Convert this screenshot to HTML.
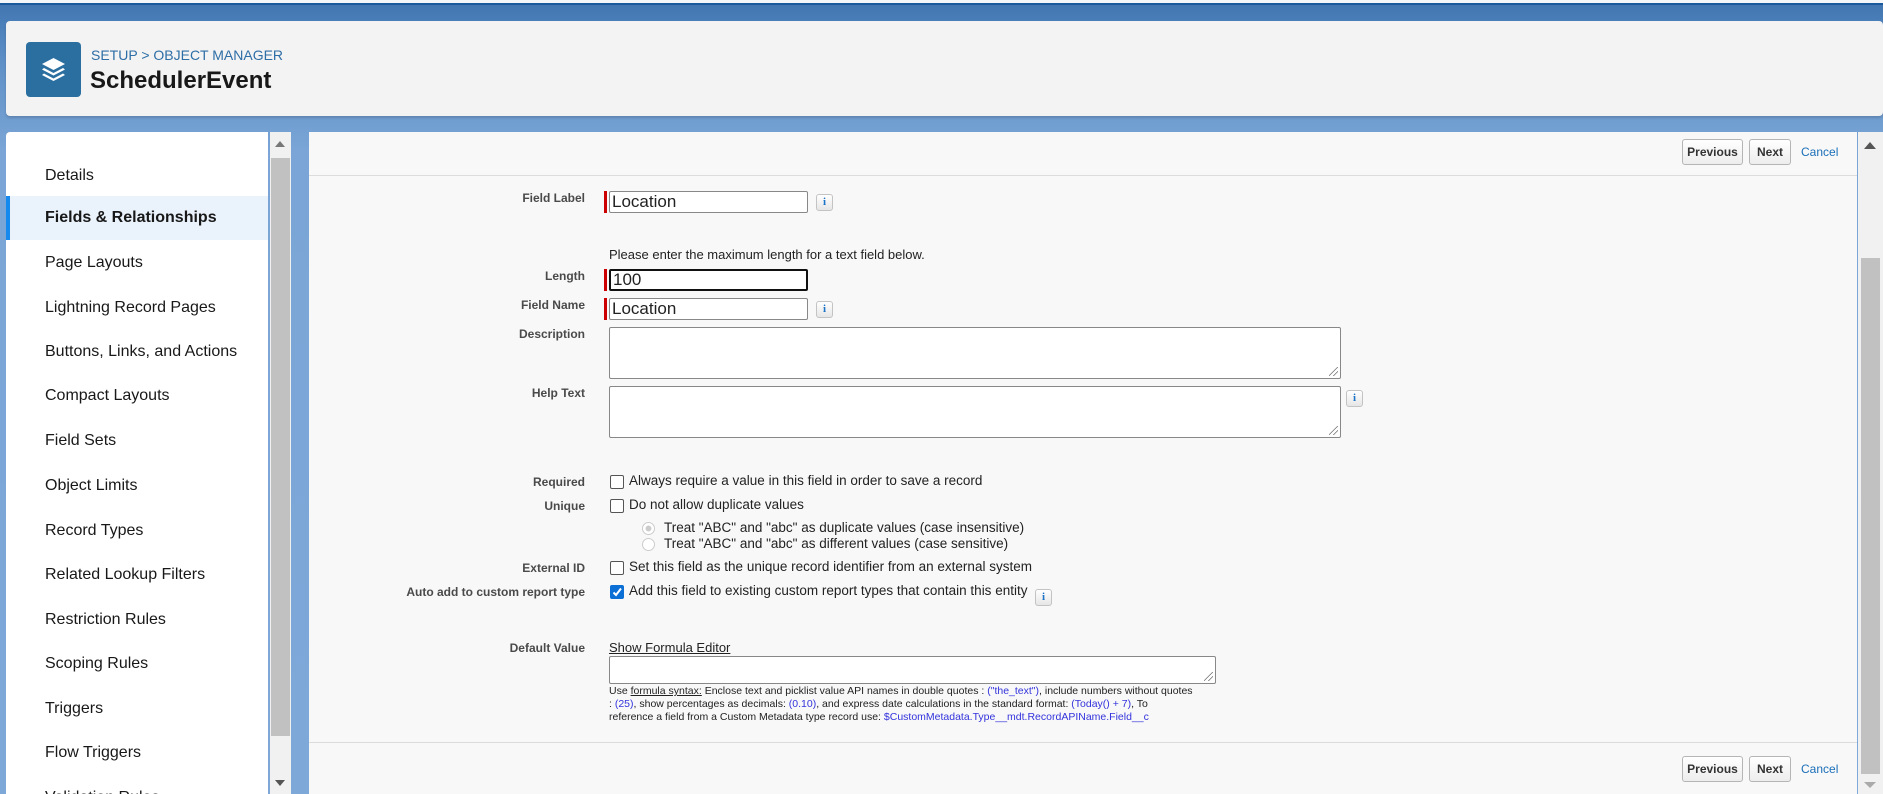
<!DOCTYPE html>
<html style="height:794px;overflow:hidden"><head><meta charset="utf-8"><style>
*{box-sizing:border-box;margin:0;padding:0}
body{width:1883px;height:794px;overflow:hidden;position:relative;font-family:"Liberation Sans",Arial,sans-serif;background:linear-gradient(#3f74b0 0,#5d8fc6 60px,#7aa5d6 150px,#7ea8d8 794px)}
.top{position:absolute;left:0;top:0;width:1883px;height:5px;background:#f4f6f9;border-bottom:2px solid #1a5a9c}
.hdr{position:absolute;left:6px;top:21px;width:1877px;height:95px;background:#f3f3f3;border-radius:4px;box-shadow:0 2px 2px rgba(0,0,0,.15)}
.ico{position:absolute;left:20px;top:21px;width:55px;height:55px;background:#2a6fa0;border-radius:4px}
.bc{position:absolute;left:85px;top:26px;font-size:14px;color:#2e6ea6}
.ttl{position:absolute;left:84px;top:46px;font-size:24px;font-weight:bold;color:#181818}
.side{position:absolute;left:6px;top:132px;width:262px;height:662px;background:#fff;border-radius:4px 0 0 0;overflow:hidden}
.side div{position:absolute;left:0;width:262px;height:44px;padding-left:39px;font-size:16px;color:#181818;line-height:44px}
.side .sel{background:#eaf2fc;font-weight:bold;border-left:4px solid #1589ee;padding-left:35px}
.sb{position:absolute;left:270px;top:132px;width:21px;height:662px;background:#f1f1f1;overflow:hidden}
.sb .th{position:absolute;left:1px;top:26px;width:19px;height:578px;background:#c1c1c1}
.main{position:absolute;left:309px;top:132px;width:1548px;height:662px;background:#f8f8f8}
.sep{position:absolute;left:0;width:1548px;height:1px;background:#dcdcdc}
.btn{position:absolute;height:26px;border:1px solid #b5b5b5;border-radius:3px;background:linear-gradient(#fff,#ededed);font-size:12px;font-weight:bold;color:#333;line-height:24px;text-align:center}
.cancel{position:absolute;font-size:12px;color:#1b6fb8}
.vsb{position:absolute;left:1858px;top:132px;width:25px;height:662px;background:#f1f1f1;overflow:hidden}
.vsb .th{position:absolute;left:3px;top:126px;width:19px;height:516px;background:#c1c1c1}
.lbl{position:absolute;right:1298px;font-size:12px;font-weight:bold;color:#4a4a4a;text-align:right;white-space:nowrap}
.inp{position:absolute;left:609px;width:199px;height:22px;background:#fff;border:1px solid #888;border-radius:2px;font-size:17px;color:#222;padding-left:2px;line-height:20px}
.req{position:absolute;left:604px;width:3px;height:22px;background:#c00}
.ta{position:absolute;left:609px;background:#fff;border:1px solid #888;border-radius:2px}
.ta:after{content:"";position:absolute;right:2px;bottom:2px;width:9px;height:9px;background:linear-gradient(135deg,transparent 45%,#777 46%,#777 52%,transparent 53%,transparent 70%,#777 71%,#777 77%,transparent 78%)}
.info{position:absolute;width:17px;height:17px;border:1px solid #c3c3c3;border-radius:3px;background:linear-gradient(#fff,#e6e6e6);color:#1a73c8;font:bold 11px "Liberation Serif",serif;text-align:center;line-height:15px}
.t{position:absolute;font-size:13.5px;color:#222;white-space:nowrap}
.cb{position:absolute;left:610px;width:14px;height:14px;border:1px solid #555;border-radius:2px;background:#fff}
.rd{position:absolute;left:642px;width:13px;height:13px;border:1px solid #ccc;border-radius:50%;background:#fff}
.help{position:absolute;left:609px;top:685px;font-size:10.5px;line-height:13px;color:#222;white-space:nowrap}
.help span{color:#3333dd}
</style></head><body>
<div class="top"></div>
<div class="hdr">
<div class="ico"><svg width="55" height="55" viewBox="0 0 55 55"><g fill="#fff"><path d="M27.5 16 L39 22 L27.5 28 L16 22Z"/><path d="M18 26 L27.5 31 L37 26 L39 27.5 L27.5 33.5 L16 27.5Z"/><path d="M18 31.5 L27.5 36.5 L37 31.5 L39 33 L27.5 39 L16 33Z"/></g></svg></div>
<div class="bc">SETUP &gt; OBJECT MANAGER</div>
<div class="ttl">SchedulerEvent</div>
</div>
<div class="side">
<div style="top:22px">Details</div>
<div class="sel" style="top:64px">Fields &amp; Relationships</div>
<div style="top:109px">Page Layouts</div>
<div style="top:154px">Lightning Record Pages</div>
<div style="top:198px">Buttons, Links, and Actions</div>
<div style="top:242px">Compact Layouts</div>
<div style="top:287px">Field Sets</div>
<div style="top:332px">Object Limits</div>
<div style="top:377px">Record Types</div>
<div style="top:421px">Related Lookup Filters</div>
<div style="top:466px">Restriction Rules</div>
<div style="top:510px">Scoping Rules</div>
<div style="top:555px">Triggers</div>
<div style="top:599px">Flow Triggers</div>
<div style="top:644px">Validation Rules</div>
</div>
<div class="sb"><div style="position:absolute;left:5px;top:9px;border:5px solid transparent;border-bottom:6px solid #777;border-top:0"></div><div class="th"></div><div style="position:absolute;left:5px;top:648px;border:5px solid transparent;border-top:6px solid #555;border-bottom:0"></div></div>
<div class="main">
<div class="sep" style="top:43px"></div>
<div class="sep" style="top:610px"></div>
</div>
<div class="btn" style="left:1682px;top:139px;width:61px">Previous</div>
<div class="btn" style="left:1749px;top:139px;width:42px">Next</div>
<div class="cancel" style="left:1801px;top:145px">Cancel</div>
<div class="btn" style="left:1682px;top:756px;width:61px">Previous</div>
<div class="btn" style="left:1749px;top:756px;width:42px">Next</div>
<div class="cancel" style="left:1801px;top:762px">Cancel</div>
<div class="vsb"><div style="position:absolute;left:6px;top:10px;border:6px solid transparent;border-bottom:7px solid #555;border-top:0"></div><div class="th"></div><div style="position:absolute;left:6px;top:650px;border:6px solid transparent;border-top:6px solid #aaa;border-bottom:0"></div></div>

<div class="lbl" style="top:191px">Field Label</div>
<div class="req" style="top:191px"></div><div class="inp" style="top:191px">Location</div>
<div class="info" style="left:816px;top:194px">i</div>
<div class="t" style="left:609px;top:247px;font-size:13px">Please enter the maximum length for a text field below.</div>
<div class="lbl" style="top:269px">Length</div>
<div class="req" style="top:269px"></div><div class="inp" style="top:269px;border:2px solid #111;line-height:18px">100</div>
<div class="lbl" style="top:298px">Field Name</div>
<div class="req" style="top:298px"></div><div class="inp" style="top:298px">Location</div>
<div class="info" style="left:816px;top:301px">i</div>
<div class="lbl" style="top:327px">Description</div>
<div class="ta" style="top:327px;width:732px;height:52px"></div>
<div class="lbl" style="top:386px">Help Text</div>
<div class="ta" style="top:386px;width:732px;height:52px"></div>
<div class="info" style="left:1346px;top:390px">i</div>

<div class="lbl" style="top:475px">Required</div>
<div class="cb" style="top:475px"></div><div class="t" style="left:629px;top:473px">Always require a value in this field in order to save a record</div>
<div class="lbl" style="top:499px">Unique</div>
<div class="cb" style="top:499px"></div><div class="t" style="left:629px;top:497px">Do not allow duplicate values</div>
<div class="rd" style="top:522px;background:radial-gradient(#ccc 35%,#fff 40%)"></div><div class="t" style="left:664px;top:520px">Treat "ABC" and "abc" as duplicate values (case insensitive)</div>
<div class="rd" style="top:538px"></div><div class="t" style="left:664px;top:536px">Treat "ABC" and "abc" as different values (case sensitive)</div>
<div class="lbl" style="top:561px">External ID</div>
<div class="cb" style="top:561px"></div><div class="t" style="left:629px;top:559px">Set this field as the unique record identifier from an external system</div>
<div class="lbl" style="top:585px">Auto add to custom report type</div>
<div class="cb" style="top:585px;background:#0b6fd6;border-color:#0b6fd6"><svg width="12" height="12" viewBox="0 0 12 12" style="position:absolute;left:0;top:0"><path d="M2.5 6.5 L5 9 L10 2.5" stroke="#fff" stroke-width="2" fill="none"/></svg></div>
<div class="t" style="left:629px;top:583px">Add this field to existing custom report types that contain this entity</div>
<div class="info" style="left:1035px;top:589px">i</div>

<div class="lbl" style="top:641px">Default Value</div>
<div class="t" style="left:609px;top:640px;font-size:13px;text-decoration:underline">Show Formula Editor</div>
<div class="ta" style="top:656px;width:607px;height:28px"></div>
<div class="help">Use <u>formula syntax:</u> Enclose text and picklist value API names in double quotes : <span>("the_text")</span>, include numbers without quotes<br>: <span>(25)</span>, show percentages as decimals: <span>(0.10)</span>, and express date calculations in the standard format: <span>(Today() + 7)</span>, To<br>reference a field from a Custom Metadata type record use: <span>$CustomMetadata.Type__mdt.RecordAPIName.Field__c</span></div>
</body></html>
